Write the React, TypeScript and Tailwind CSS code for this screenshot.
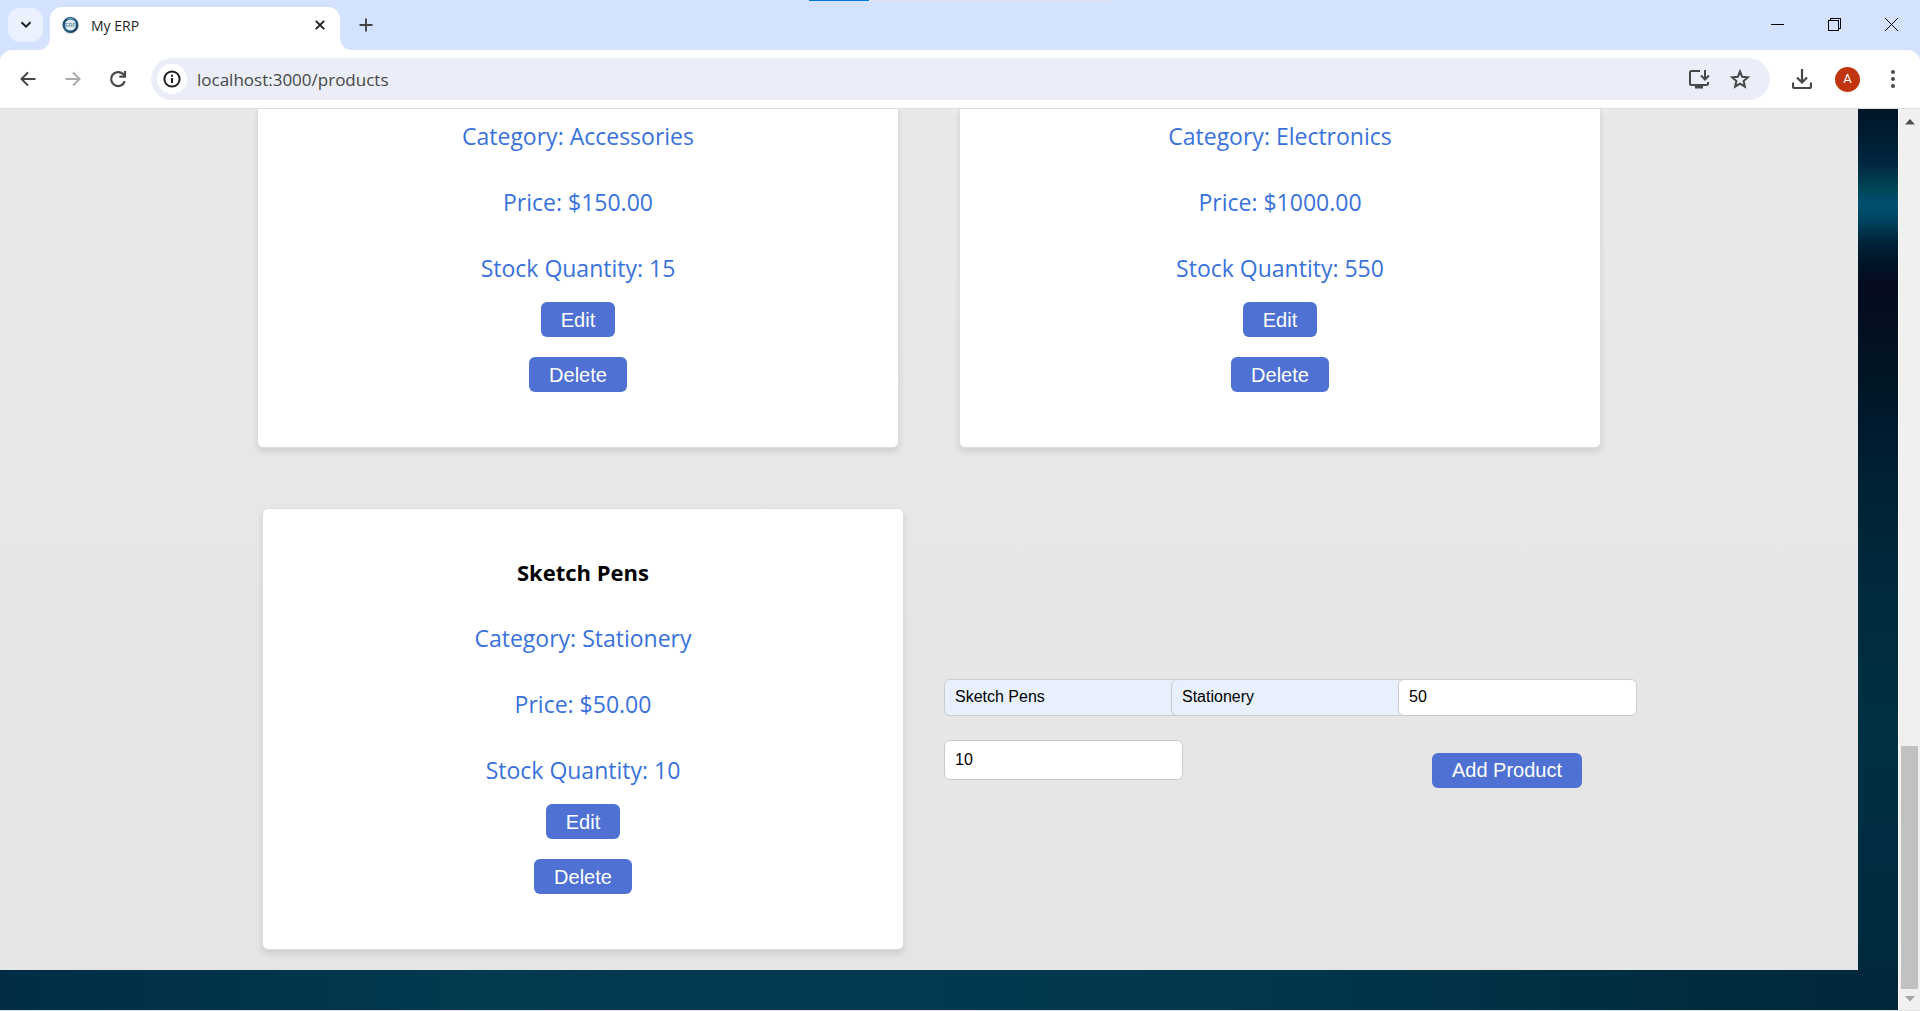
import React from "react";

type Product = { name?: string; category: string; price: string; stock: number };

const topProducts: Product[] = [
  { category: "Accessories", price: "150.00", stock: 15 },
  { category: "Electronics", price: "1000.00", stock: 550 },
];

const actionClass =
  "h-[35px] rounded-md bg-[#4e71d3] px-5 font-['Liberation_Sans',sans-serif] text-xl leading-6 text-white";

const iconButton = "grid shrink-0 place-items-center text-[#474747]";

function ProductDetails({ product }: { product: Product }) {
  return (
    <>
      <p className="mb-[34px]">Category: {product.category}</p>
      <p className="mb-[34px]">Price: ${product.price}</p>
      <p className="mb-[18px]">Stock Quantity: {product.stock}</p>
      <div className="flex flex-col items-center gap-5">
        <button type="button" className={actionClass}>Edit</button>
        <button type="button" className={actionClass}>Delete</button>
      </div>
    </>
  );
}

function TabStrip() {
  return (
    <div className="relative flex h-[50px] items-end bg-[#d3e2fe]">
      <div className="absolute left-[809px] top-0 flex h-px w-[301px] bg-[#e5e5e5]">
        <span className="w-[60px] bg-[#0078d7]" />
      </div>
      <button type="button" aria-label="Search tabs" className="mb-2 ml-2 grid h-[34px] w-[35px] place-items-center rounded-xl bg-[#ebf1fe]">
        <svg width="12" height="8" viewBox="0 0 12 8" fill="none" stroke="#1f1f1f" strokeWidth="2"><path d="M1.5 1.2 6 5.7l4.5-4.5" /></svg>
      </button>
      <div className="relative ml-[7px] flex h-[43px] w-[290px] items-center rounded-t-xl bg-white pb-[7px] pl-3 pr-3">
        <svg className="absolute -left-3 bottom-0" width="12" height="12" fill="#fff"><path d="M12 0v12H0A12 12 0 0 0 12 0" /></svg>
        <svg className="absolute -right-3 bottom-0" width="12" height="12" fill="#fff"><path d="M0 0v12h12A12 12 0 0 1 0 0" /></svg>
        <svg width="17" height="20" viewBox="0 0 17 20">
          <defs>
            <linearGradient id="ring" x1="0" y1="0" x2="1" y2="1">
              <stop offset="0" stopColor="#123c5e" /><stop offset=".5" stopColor="#2a6688" /><stop offset="1" stopColor="#0f3350" />
            </linearGradient>
          </defs>
          <ellipse cx="8.5" cy="18" rx="5" ry="1" fill="#e4e4e4" />
          <circle cx="8.5" cy="10" r="6.800" fill="#dfeaf1" stroke="url(#ring)" strokeWidth="2.400" />
          <path d="M5 4.300a7 7 0 0 1 6.500-.3" stroke="#5fb0d4" fill="none" />
          <text x="8.500" y="12" textAnchor="middle" fontSize="5.500" fontWeight="700" fontFamily="Liberation Sans" fill="#6d93aa">ERP</text>
        </svg>
        <span className="ml-3 flex-1 pt-px font-['Open_Sans',sans-serif] text-sm text-[#1f1f1f]">My ERP</span>
        <button type="button" aria-label="Close tab" className="grid size-4 place-items-center">
          <svg width="10" height="10" viewBox="0 0 10 10" stroke="#1f1f1f" strokeWidth="1.900"><path d="m.8.8 8.400 8.400M9.200.8.8 9.200" /></svg>
        </button>
      </div>
      <button type="button" aria-label="New tab" className="mb-[18px] ml-[19px]">
        <svg width="14" height="14" viewBox="0 0 14 14" stroke="#444" strokeWidth="1.900"><path d="M7 .5v13M.5 7h13" /></svg>
      </button>
      <div className="mb-[19px] ml-auto mr-[22px] flex items-center gap-11 text-black">
        <button type="button" aria-label="Minimize"><svg width="13" height="13" stroke="currentColor" shapeRendering="crispEdges"><path d="M0 6.500h13" /></svg></button>
        <button type="button" aria-label="Restore"><svg width="13" height="13" stroke="currentColor" fill="none" shapeRendering="crispEdges"><path d="M.5 2.500h10v10H.5zM2.500 2.500v-2h10v10h-2" /></svg></button>
        <button type="button" aria-label="Close window"><svg width="13" height="13" stroke="currentColor"><path d="m0 0 13 13M13 0 0 13" /></svg></button>
      </div>
    </div>
  );
}

function Toolbar() {
  return (
    <div className="bg-[#d3e2fe]">
      <div className="flex h-[59px] items-center rounded-t-xl border-b border-[#dfdfdf] bg-white pl-5 pr-6">
        <button type="button" aria-label="Back" className={iconButton}>
          <svg width="16" height="16" viewBox="0 0 16 16" fill="none" stroke="currentColor" strokeWidth="2"><path d="M15.500 8H2M8 1.500 1.500 8 8 14.500" /></svg>
        </button>
        <button type="button" aria-label="Forward" className="ml-[29px] grid shrink-0 place-items-center text-[#ababab]">
          <svg width="16" height="16" viewBox="0 0 16 16" fill="none" stroke="currentColor" strokeWidth="2"><path d="M.5 8H14M8 1.500 14.500 8 8 14.500" /></svg>
        </button>
        <button type="button" aria-label="Reload" className={iconButton + " ml-7"}>
          <svg width="18" height="18" viewBox="0 0 18 18" fill="none" stroke="currentColor" strokeWidth="2.200"><path d="M15.800 11.200A7 7 0 1 1 14 4L15.500 5.500" /><path d="M16 1v5.700h-5.700" /></svg>
        </button>
        <div className="ml-6 flex h-[42px] flex-1 items-center rounded-full bg-[#ebeef8] pl-1.5 pr-5">
          <button type="button" aria-label="Site information" className="grid size-[30px] shrink-0 place-items-center rounded-full bg-white text-[#1f1f1f]">
            <svg width="18" height="18" viewBox="0 0 18 18" fill="none" stroke="currentColor" strokeWidth="2"><circle cx="9" cy="9" r="7.600" /><path d="M9 8v5M9 4.800v2" /></svg>
          </button>
          <input aria-label="Address" defaultValue="localhost:3000/products" className="ml-2.5 min-w-0 flex-1 bg-transparent pt-0.5 font-['Open_Sans',sans-serif] text-[17px] text-[#474747] outline-none" />
          <button type="button" aria-label="Install app" className={iconButton}>
            <svg width="22" height="20" viewBox="0 0 22 20" fill="none" stroke="currentColor" strokeWidth="2"><path d="M12 2H3.500A1.500 1.500 0 0 0 2 3.500v11A1.500 1.500 0 0 0 3.500 16h15a1.500 1.500 0 0 0 1.500-1.500V13M17 1v9M13 6.500l4 4 4-4" /><path d="M7 18h8" strokeWidth="3" /></svg>
          </button>
          <button type="button" aria-label="Bookmark" className={iconButton + " ml-5"}>
            <svg width="20" height="20" viewBox="0 0 20 20" fill="none" stroke="currentColor" strokeWidth="2"><path d="m10 2.500 2.200 5.300 5.700.5-4.300 3.700 1.300 5.600L10 14.600l-4.900 3 1.300-5.600-4.300-3.700 5.700-.5z" /></svg>
          </button>
        </div>
        <button type="button" aria-label="Downloads" className={iconButton + " ml-[22px]"}>
          <svg width="20" height="20" viewBox="0 0 20 20" fill="none" stroke="currentColor" strokeWidth="2.200"><path d="M10 0v13M5 8.500l5 5 5-5M1 13.500v4A1.500 1.500 0 0 0 2.500 19h15a1.500 1.500 0 0 0 1.500-1.500v-4" /></svg>
        </button>
        <button type="button" aria-label="Profile" className="ml-[23px] grid size-[25px] shrink-0 place-items-center rounded-full bg-[#c0350d] font-['Roboto',sans-serif] text-[13px] text-white">A</button>
        <button type="button" aria-label="Browser menu" className={iconButton + " ml-[30px]"}>
          <svg width="6" height="20" fill="currentColor"><circle cx="3" cy="3" r="2" /><circle cx="3" cy="10" r="2" /><circle cx="3" cy="17" r="2" /></svg>
        </button>
      </div>
    </div>
  );
}

const cardClass =
  "border border-[#ddd] bg-white text-center text-[#3a72dc] shadow-[0_4px_6px_rgba(0,0,0,0.1)]";
const fieldClass =
  "w-[239px] rounded-md border border-[#ccc] px-2.5 text-base text-black outline-none";

export default function App() {
  return (
    <div className="flex min-h-screen flex-col">
      <TabStrip />
      <Toolbar />
      <div className="flex flex-1 border-b border-[#e3e3e3] bg-[#f0f0f0]">
        <div className="flex-1 bg-[linear-gradient(90deg,#002d45_0%,#023a50_25%,#033950_50%,#02374c_65%,#003044_80%,#00273b_100%)]">
          <div className="flex bg-[linear-gradient(180deg,#001526_0px,#001a2e_20px,#002740_55px,#004455_78px,#00506f_95px,#004560_110px,#002236_135px,#001426_155px,#060b20_175px,#040f20_210px,#001624_270px,#001a2e_320px,#002233_370px,#002b3e_500px,#003043_620px,#002c42_760px,#00293d_861px)]">
            <main className="mr-10 flex-1 bg-[linear-gradient(180deg,#e9e9e9,#e5e5e5)] px-[257px] pb-5 font-['Open_Sans','Noto_Sans',sans-serif] text-[23px] leading-8">
              <div className="grid grid-cols-2 gap-[60px]">
                {topProducts.map((product) => (
                  <article key={product.category} className={cardClass + " rounded-b-md border-t-0 pb-[55px] pt-[11px]"}>
                    <ProductDetails product={product} />
                  </article>
                ))}
              </div>
              <div className="-mr-9 ml-[5px] mt-[60px] flex items-center justify-between">
                <article className={cardClass + " w-[642px] rounded-md pb-[55px] pt-[47px]"}>
                  <h2 className="mb-[34px] text-[22px] font-bold text-black">Sketch Pens</h2>
                  <ProductDetails product={{ category: "Stationery", price: "50.00", stock: 10 }} />
                </article>
                <form className="w-[693px] pt-2 font-['Liberation_Sans',sans-serif]" onSubmit={(e) => e.preventDefault()}>
                  <div className="grid grid-cols-[227px_227px_239px]">
                    <input aria-label="Product name" defaultValue="Sketch Pens" className={fieldClass + " h-[37px] bg-[#e8f0fe]"} />
                    <input aria-label="Category" defaultValue="Stationery" className={fieldClass + " z-10 h-[37px] bg-[#e8f0fe]"} />
                    <input aria-label="Price" defaultValue="50" className={fieldClass + " z-20 h-[37px] bg-white"} />
                  </div>
                  <div className="mt-6 flex items-start justify-between pr-[55px]">
                    <input aria-label="Stock quantity" defaultValue="10" className={fieldClass + " h-10 bg-white"} />
                    <button type="submit" className={actionClass + " mt-[13px]"}>Add Product</button>
                  </div>
                </form>
              </div>
            </main>
          </div>
          <div className="h-10" />
        </div>
        <div className="flex w-[22px] flex-col items-center justify-between border-l border-white py-2">
          <svg width="10" height="6" className="mt-0.5" fill="#505050"><path d="M0 5.500 5 0l5 5.500z" /></svg>
          <div className="mb-[7px] mt-auto h-[243px] w-[17px] bg-[#c1c1c1]" />
          <svg width="10" height="6" fill="#a3a3a3"><path d="m0 0 5 5.500L10 0z" /></svg>
        </div>
      </div>
    </div>
  );
}
